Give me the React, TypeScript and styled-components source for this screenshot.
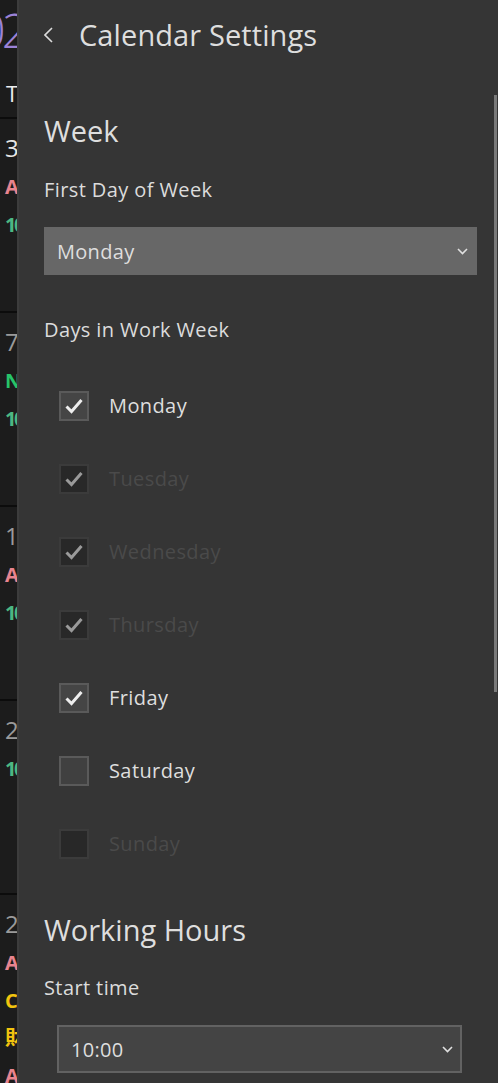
import React from "react";
import styled, { createGlobalStyle } from "styled-components";

const GlobalStyle = createGlobalStyle`
  html, body { margin: 0; padding: 0; background: #353535; }
  body { font-family: "Open Sans", "Noto Sans", sans-serif; }
  * { box-sizing: border-box; }
`;

const Screen = styled.div`
  display: flex;
  width: 498px;
  height: 1083px;
  overflow: hidden;
`;

const Strip = styled.div`
  width: 17px;
  flex: none;
  background: #1c1c1c;
  overflow: hidden;
  display: flex;
  flex-direction: column;
  font-family: "Open Sans", "Noto Sans", "Noto Sans CJK JP", sans-serif;
`;

const YearLabel = styled.div`
  height: 60px;
  flex: none;
  margin-left: -44px;
  letter-spacing: -4px;
  white-space: nowrap;
  color: #9b82d6;
  font-size: 47px;
  line-height: 60px;
  font-weight: 300;
`;

const WeekdayHeader = styled.div`
  height: 57px;
  flex: none;
  padding: 9px 0 0 6px;
  color: #eeeeee;
  font-size: 22px;
  line-height: 48px;
`;

const DayCell = styled.div`
  height: 194px;
  flex: none;
  border-top: 2px solid #0c0c0c;
  padding-left: 5px;
  display: flex;
  flex-direction: column;
`;

const DayNumber = styled.div<{ $dim?: boolean }>`
  height: 49px;
  flex: none;
  padding-top: 11px;
  font-size: 24px;
  letter-spacing: -1.5px;
  line-height: 36px;
  color: ${(p) => (p.$dim ? "#9a9a9a" : "#e6e6e6")};
  white-space: nowrap;
`;

const EventTag = styled.div<{ $color: string }>`
  height: 37.5px;
  flex: none;
  font-size: 20px;
  font-weight: 700;
  letter-spacing: -2.5px;
  line-height: 37.5px;
  color: ${(p) => p.$color};
  white-space: nowrap;
`;

const Panel = styled.div`
  position: relative;
  flex: 1;
  background: #353535;
  border-left: 2px solid #3c3c3c;
  border-right: 1px solid #7a62b3;
  color: #dcdcdc;
`;

const Header = styled.div`
  height: 70px;
  display: flex;
  align-items: center;
  padding-left: 25px;
`;

const BackButton = styled.div`
  width: 9px;
  height: 16px;
  margin-right: 26px;
  display: flex;
  align-items: center;
`;

const Title = styled.div`
  font-size: 29px;
  line-height: 40px;
  letter-spacing: 0.1px;
  color: #dedede;
`;

const Content = styled.div`
  padding-left: 25px;
  padding-right: 22px;
  display: flex;
  flex-direction: column;
`;

const SectionTitle = styled.div<{ $top: number }>`
  margin-top: ${(p) => p.$top}px;
  font-size: 29px;
  line-height: 40px;
  color: #dedede;
`;

const FieldLabel = styled.div<{ $top: number }>`
  margin-top: ${(p) => p.$top}px;
  font-size: 20px;
  letter-spacing: 0.4px;
  line-height: 28px;
  color: #dcdcdc;
`;

const Select = styled.div<{ $variant: "filled" | "outlined" }>`
  margin-top: 23px;
  height: 48px;
  display: flex;
  align-items: center;
  justify-content: space-between;
  font-size: 20px;
  letter-spacing: 0.3px;
  color: #dedede;
  ${(p) =>
    p.$variant === "filled"
      ? `
    width: 433px;
    background: #676767;
    padding: 0 9px 0 13px;
  `
      : `
    width: 405px;
    margin-left: 13px;
    background: #444444;
    border: 2px solid #626262;
    padding: 0 7px 0 12px;
  `}
`;

const CheckList = styled.div`
  margin-top: 25px;
  display: flex;
  flex-direction: column;
`;

const CheckRow = styled.div<{ $disabled?: boolean }>`
  height: 73px;
  display: flex;
  align-items: center;
  padding-left: 15px;
  gap: 20px;
  font-size: 20px;
  letter-spacing: 0.4px;
  color: ${(p) => (p.$disabled ? "#4a4a4a" : "#dedede")};
`;

const Box = styled.div<{ $disabled?: boolean; $checked?: boolean }>`
  width: 30px;
  height: 30px;
  flex: none;
  display: flex;
  align-items: center;
  justify-content: center;
  border: 2px solid ${(p) => (p.$disabled ? "#3b3b3b" : "#5a5a5a")};
  background: ${(p) => (p.$disabled ? "#282828" : p.$checked ? "#454545" : "#404040")};
`;

const Scrollbar = styled.div`
  position: absolute;
  top: 95px;
  right: 2px;
  width: 3px;
  height: 597px;
  background: #7a7a7a;
`;

const Chevron = () => (
  <svg width="11" height="7" viewBox="0 0 11 7">
    <polyline points="1,1 5.5,5.5 10,1" fill="none" stroke="#e0e0e0" strokeWidth="1.6" />
  </svg>
);

const Check = ({ color }: { color: string }) => (
  <svg width="20" height="18" viewBox="0 0 20 18">
    <polyline points="2.5,9.5 7.5,14.5 17.5,3" fill="none" stroke={color} strokeWidth="3" />
  </svg>
);

const days = [
  { name: "Monday", checked: true, disabled: false },
  { name: "Tuesday", checked: true, disabled: true },
  { name: "Wednesday", checked: true, disabled: true },
  { name: "Thursday", checked: true, disabled: true },
  { name: "Friday", checked: true, disabled: false },
  { name: "Saturday", checked: false, disabled: false },
  { name: "Sunday", checked: false, disabled: true },
];

const PINK = "#e8848f";
const GREEN = "#4cb882";
const BRIGHT = "#27c469";
const YELLOW = "#f2c40f";

const cells: { day: string; dim?: boolean; events: { t: string; c: string }[] }[] = [
  { day: "30", events: [{ t: "A", c: PINK }, { t: "10", c: GREEN }] },
  { day: "7", dim: true, events: [{ t: "N", c: BRIGHT }, { t: "10", c: GREEN }] },
  { day: "14", dim: true, events: [{ t: "A", c: PINK }, { t: "10", c: GREEN }] },
  { day: "21", dim: true, events: [{ t: "10", c: GREEN }] },
  {
    day: "28",
    dim: true,
    events: [
      { t: "A", c: PINK },
      { t: "C", c: YELLOW },
      { t: "財", c: YELLOW },
      { t: "A", c: PINK },
    ],
  },
];

export default function App() {
  return (
    <>
      <GlobalStyle />
      <Screen>
        <Strip>
          <YearLabel>2022</YearLabel>
          <WeekdayHeader>T</WeekdayHeader>
          {cells.map((c, i) => (
            <DayCell key={i}>
              <DayNumber $dim={c.dim}>{c.day}</DayNumber>
              {c.events.map((e, j) => (
                <EventTag key={j} $color={e.c}>
                  {e.t}
                </EventTag>
              ))}
            </DayCell>
          ))}
        </Strip>
        <Panel>
          <Header>
            <BackButton>
              <svg width="9" height="16" viewBox="0 0 9 16">
                <polyline points="8,1 1,8 8,15" fill="none" stroke="#dcdcdc" strokeWidth="1.6" />
              </svg>
            </BackButton>
            <Title>Calendar Settings</Title>
          </Header>
          <Content>
            <SectionTitle $top={41}>Week</SectionTitle>
            <FieldLabel $top={25}>First Day of Week</FieldLabel>
            <Select $variant="filled">
              <span>Monday</span>
              <Chevron />
            </Select>
            <FieldLabel $top={41}>Days in Work Week</FieldLabel>
            <CheckList>
              {days.map((d) => (
                <CheckRow key={d.name} $disabled={d.disabled}>
                  <Box $disabled={d.disabled} $checked={d.checked}>
                    {d.checked && <Check color={d.disabled ? "#9a9a9a" : "#eeeeee"} />}
                  </Box>
                  {d.name}
                </CheckRow>
              ))}
            </CheckList>
            <SectionTitle $top={30}>Working Hours</SectionTitle>
            <FieldLabel $top={24}>Start time</FieldLabel>
            <Select $variant="outlined">
              <span>10:00</span>
              <Chevron />
            </Select>
          </Content>
          <Scrollbar />
        </Panel>
      </Screen>
    </>
  );
}
